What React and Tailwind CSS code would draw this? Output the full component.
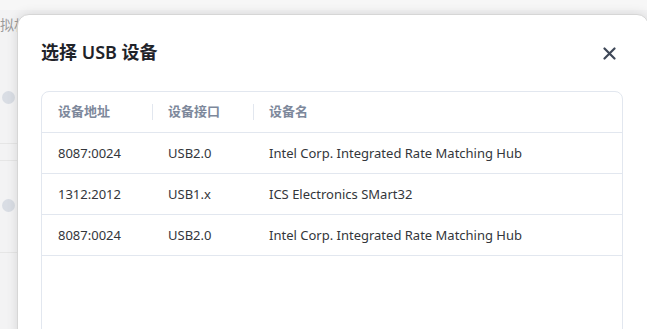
import React from "react";

const rows = [
  ["8087:0024", "USB2.0", "Intel Corp. Integrated Rate Matching Hub"],
  ["1312:2012", "USB1.x", "ICS Electronics SMart32"],
  ["8087:0024", "USB2.0", "Intel Corp. Integrated Rate Matching Hub"],
];

export default function App() {
  const font = { fontFamily: '"Noto Sans", "Noto Sans CJK SC", sans-serif' };
  return (
    <div className="relative w-[647px] h-[329px] overflow-hidden bg-[#f3f3f4]" style={font}>
      {/* background page (dimmed) */}
      <div className="flex flex-col w-full h-full">
        <div className="h-[10px] bg-[#f7f7f7]" />
        <div className="flex flex-col w-[40px]">
          <div className="h-[30px] text-[14px] leading-[30px] text-[#9a9a9a] whitespace-nowrap">拟机</div>
          <div className="h-[50px]" />
          <div className="h-[14px] flex items-center pl-[2px]">
            <div className="w-[13px] h-[13px] rounded-full bg-[#d9dde4]" />
          </div>
          <div className="h-[40px] border-b border-[#e6e6e6]" />
          <div className="h-[17px] border-b border-[#e6e6e6]" />
          <div className="h-[37px]" />
          <div className="h-[14px] flex items-center pl-[2px]">
            <div className="w-[13px] h-[13px] rounded-full bg-[#d9dde4]" />
          </div>
          <div className="h-[41px] border-b border-[#e6e6e6]" />
        </div>
      </div>

      {/* dialog */}
      <div className="absolute left-[17px] top-[14px] w-[632px] h-[340px] bg-white rounded-[12px] border border-[#d6d6d6] shadow-[0_0_12px_rgba(0,0,0,0.12)] flex flex-col px-[23px]">
        <div className="flex items-center justify-between pt-[25px] pb-[27px]">
          <div className="text-[18px] leading-[24px] font-semibold text-[#1f2329]">选择 USB 设备</div>
          <svg width="13" height="13" viewBox="0 0 13 13" className="mr-[9px] mt-[2px]">
            <path d="M1.5 1.5 L11.5 11.5 M11.5 1.5 L1.5 11.5" stroke="#3f4858" strokeWidth="2.2" strokeLinecap="round" />
          </svg>
        </div>
        <div className="border border-[#e2e7ef] rounded-[8px] flex-1 w-[582px] overflow-hidden">
          <div className="flex h-[41px] items-center border-b border-[#e2e7ef] text-[13px] font-semibold text-[#7d889b]">
            <div className="w-[111px] pl-[16px] relative h-full flex items-center">
              设备地址
              <div className="absolute right-0 top-[12px] h-[16px] w-px bg-[#e2e7ef]" />
            </div>
            <div className="w-[101px] pl-[15px] relative h-full flex items-center">
              设备接口
              <div className="absolute right-0 top-[12px] h-[16px] w-px bg-[#e2e7ef]" />
            </div>
            <div className="pl-[15px]">设备名</div>
          </div>
          {rows.map((r, i) => (
            <div key={i} className="flex h-[41px] items-center border-b border-[#e2e7ef] text-[13px] text-[#33363b] pt-[1px]">
              <div className="w-[111px] pl-[16px]">{r[0]}</div>
              <div className="w-[101px] pl-[15px]">{r[1]}</div>
              <div className="pl-[15px]">{r[2]}</div>
            </div>
          ))}
        </div>
      </div>
    </div>
  );
}
